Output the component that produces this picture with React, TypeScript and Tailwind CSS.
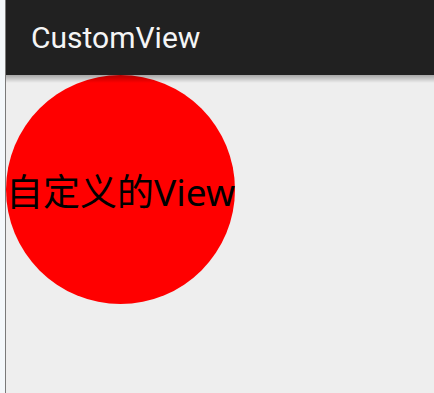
export default function App() {
  return (
    <div className="flex h-[393px] w-[434px] overflow-hidden bg-white">
      {/* window edge */}
      <div className="w-[5px] bg-[#f4f8fb]" />
      <div className="w-px bg-[#7a7a7a]" />
      <div className="flex flex-1 flex-col">
        <div className="flex h-[75px] items-center bg-[#212121] px-[25px]">
          <span
            className="text-[30px] leading-none text-[#f5f5f5]"
            style={{ fontFamily: 'Roboto, "Liberation Sans", sans-serif' }}
          >
            CustomView
          </span>
        </div>
        <div className="relative flex-1 bg-[#eeeeee]">
          <div className="pointer-events-none absolute inset-x-0 top-0 h-[8px] bg-gradient-to-b from-black/30 to-transparent" />
          <div className="flex h-[229px] w-[229px] items-center justify-center rounded-full bg-[#ff0000]">
            <span
              className="mt-[4px] whitespace-nowrap text-[37px] leading-none text-black"
              style={{ fontFamily: '"Noto Sans", "Noto Sans CJK SC", sans-serif' }}
            >
              自定义的View
            </span>
          </div>
        </div>
      </div>
    </div>
  );
}
